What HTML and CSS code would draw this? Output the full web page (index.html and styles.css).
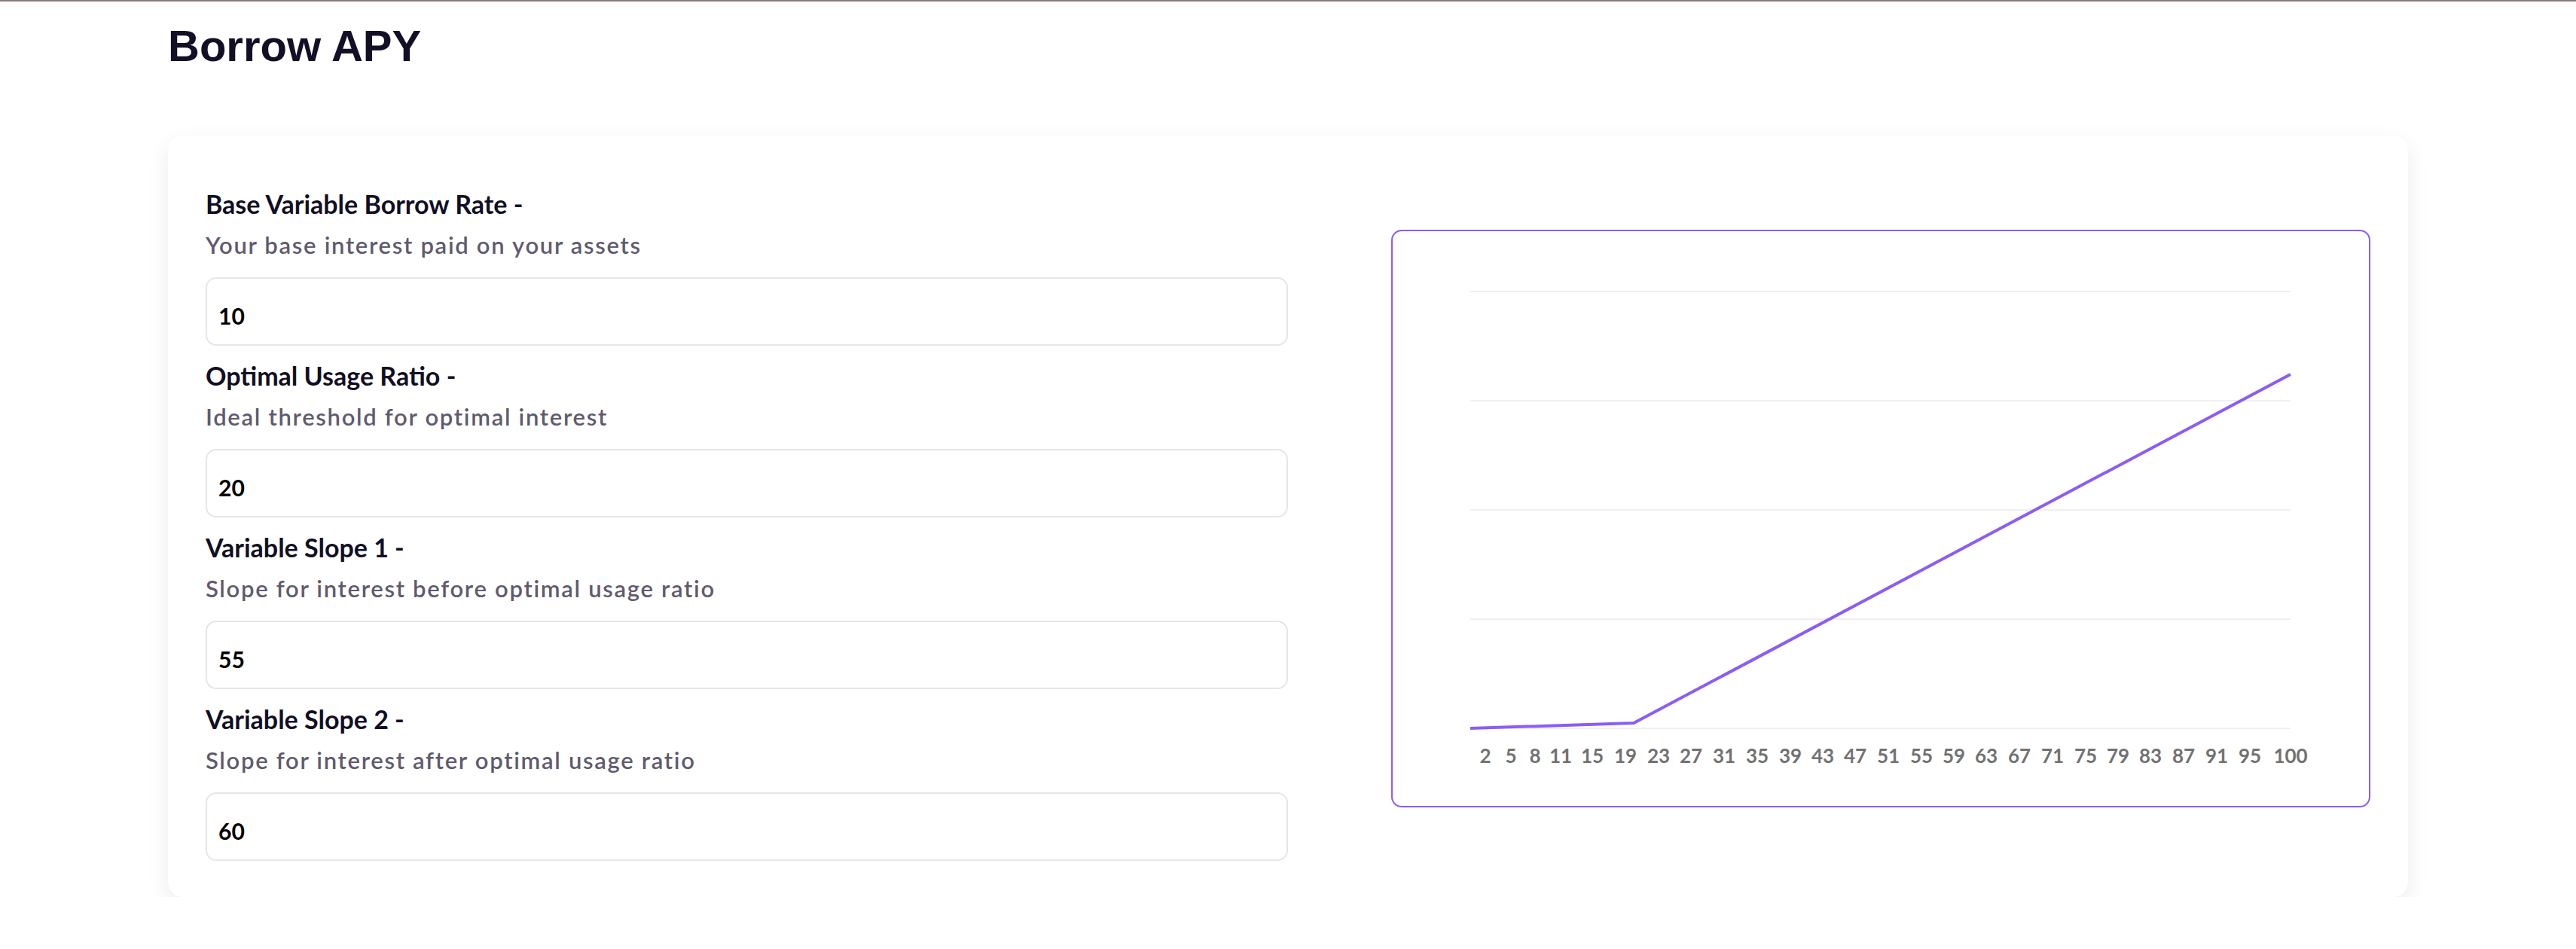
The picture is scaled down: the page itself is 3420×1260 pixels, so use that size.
FILE: index.html
```html
<!DOCTYPE html>
<html lang="en">
<head>
<meta charset="utf-8">
<title>Borrow APY</title>
<link rel="stylesheet" href="styles.css">
</head>
<body>
<main class="page">
  <h1 class="title">Borrow APY</h1>
  <section class="card">
    <div class="fields">
      <div class="field">
        <div class="label">Base Variable Borrow Rate -</div>
        <div class="hint">Your base interest paid on your assets</div>
        <input class="input" type="text" value="10">
      </div>
      <div class="field">
        <div class="label">Optimal Usage Ratio -</div>
        <div class="hint">Ideal threshold for optimal interest</div>
        <input class="input" type="text" value="20">
      </div>
      <div class="field">
        <div class="label">Variable Slope 1 -</div>
        <div class="hint">Slope for interest before optimal usage ratio</div>
        <input class="input" type="text" value="55">
      </div>
      <div class="field">
        <div class="label">Variable Slope 2 -</div>
        <div class="hint">Slope for interest after optimal usage ratio</div>
        <input class="input" type="text" value="60">
      </div>
    </div>
    <div class="chart">
      <svg class="chart-svg" viewBox="0 0 1296 763" width="1296" height="763">
        <g class="grid">
          <line x1="103" y1="80" x2="1192" y2="80"/>
          <line x1="103" y1="225" x2="1192" y2="225"/>
          <line x1="103" y1="370" x2="1192" y2="370"/>
          <line x1="103" y1="515" x2="1192" y2="515"/>
          <line x1="103" y1="660" x2="1192" y2="660"/>
        </g>
        <polyline class="series" points="103,660 320,653 1192,190"/>
        <g class="ticks">
          <text x="123" y="706">2</text>
          <text x="157" y="706">5</text>
          <text x="189" y="706">8</text>
          <text x="223" y="706">11</text>
          <text x="265" y="706">15</text>
          <text x="309" y="706">19</text>
          <text x="353" y="706">23</text>
          <text x="396" y="706">27</text>
          <text x="440" y="706">31</text>
          <text x="484" y="706">35</text>
          <text x="528" y="706">39</text>
          <text x="571" y="706">43</text>
          <text x="614" y="706">47</text>
          <text x="658" y="706">51</text>
          <text x="702" y="706">55</text>
          <text x="745" y="706">59</text>
          <text x="788" y="706">63</text>
          <text x="832" y="706">67</text>
          <text x="876" y="706">71</text>
          <text x="920" y="706">75</text>
          <text x="963" y="706">79</text>
          <text x="1006" y="706">83</text>
          <text x="1050" y="706">87</text>
          <text x="1094" y="706">91</text>
          <text x="1138" y="706">95</text>
          <text x="1192" y="706">100</text>
        </g>
      </svg>
    </div>
  </section>
</main>
</body>
</html>
```

FILE: styles.css
```css
html, body {
  margin: 0;
  padding: 0;
  background: #ffffff;
}

body {
  border-top: 2px solid #8a7a76;
  font-family: "Lato", "Liberation Sans", sans-serif;
}

.page {
  width: 2974px;
  margin: 0 auto;
}

.title {
  margin: 30px 0 90px 0;
  font-family: "Liberation Sans", Arial, sans-serif;
  font-weight: 700;
  font-size: 58px;
  line-height: 58px;
  color: #130f26;
}

.card {
  background: #ffffff;
  border-radius: 20px;
  box-shadow: 0 10px 30px rgba(0, 0, 0, 0.08);
  padding: 48px 50px;
  display: grid;
  grid-template-columns: 1fr 1fr;
  align-items: center;
}

.fields {
  padding-top: 21px;
  display: flex;
  flex-direction: column;
  gap: 18px;
}

.field {
  display: flex;
  flex-direction: column;
}

.label {
  font-size: 34px;
  line-height: 44px;
  font-weight: 700;
  color: #110f24;
}

.hint {
  margin-top: 12px;
  font-size: 31px;
  line-height: 40px;
  font-weight: 600;
  letter-spacing: 1.7px;
  color: #5f5b6f;
}

.input {
  margin-top: 23px;
  box-sizing: border-box;
  width: 100%;
  height: 91px;
  border: 2px solid #e6e6e6;
  border-radius: 14px;
  padding: 11px 15px 0 15px;
  font-family: "Lato", "Liberation Sans", sans-serif;
  font-size: 30px;
  font-weight: 700;
  color: #000000;
  background: #ffffff;
  outline: none;
}

.chart {
  justify-self: end;
  margin-top: 6px;
  width: 1300px;
  height: 767px;
  box-sizing: border-box;
  border: 2px solid #8b5cf6;
  border-radius: 14px;
  display: flex;
}

.chart-svg {
  display: block;
}

.grid line {
  stroke: #efefef;
  stroke-width: 2;
}

.series {
  fill: none;
  stroke: #8b5cf6;
  stroke-width: 4;
  stroke-linejoin: round;
}

.ticks text {
  font-family: "Lato", "Liberation Sans", sans-serif;
  font-size: 26px;
  font-weight: 700;
  fill: #727272;
  text-anchor: middle;
}
```
